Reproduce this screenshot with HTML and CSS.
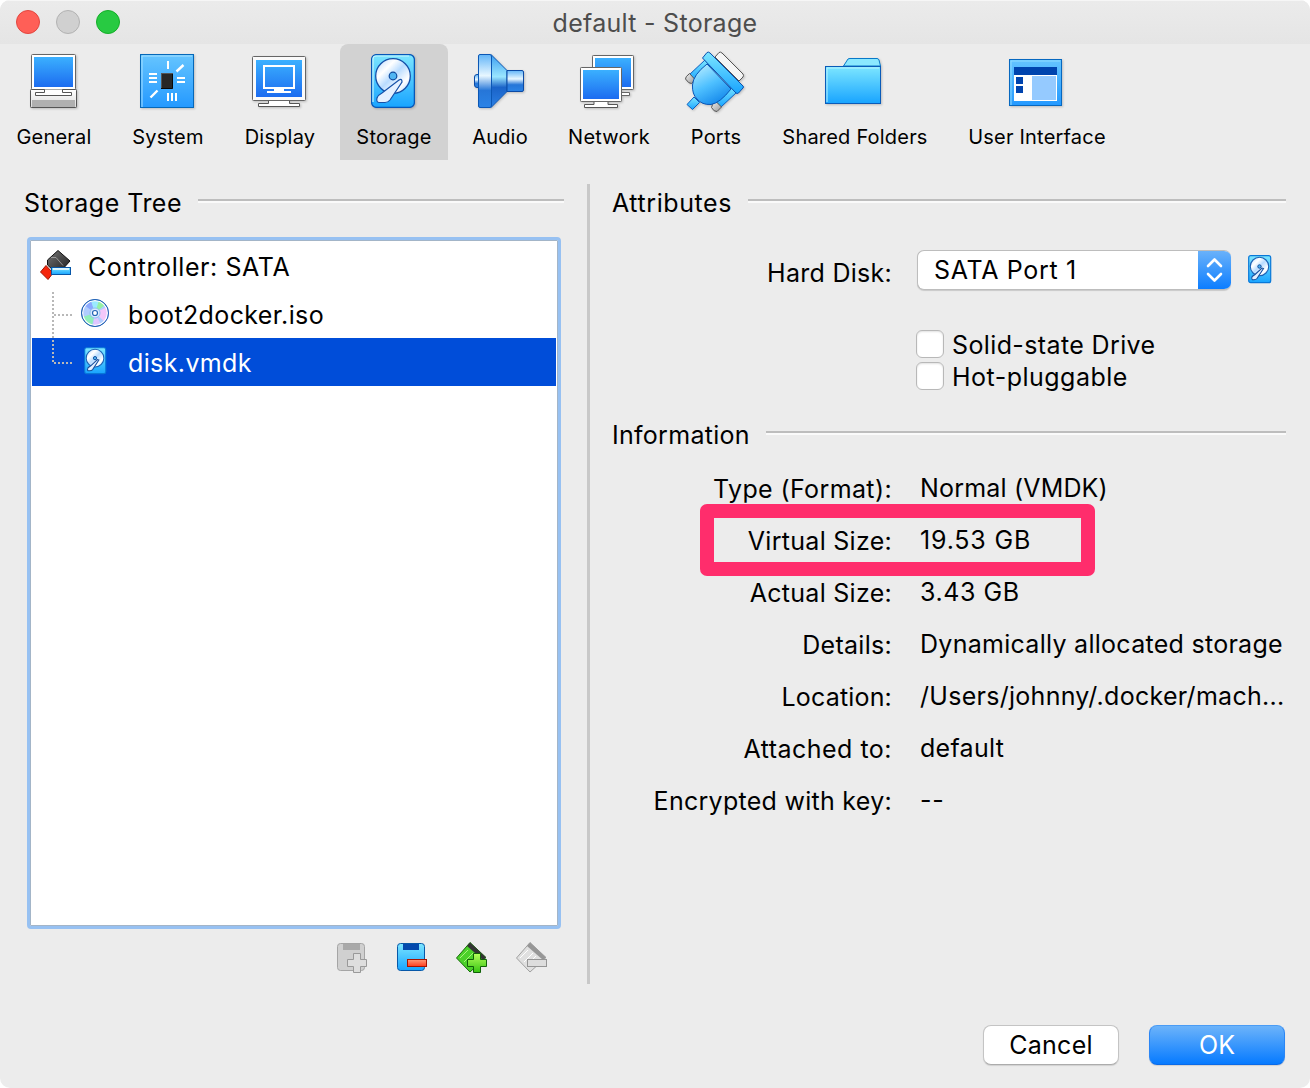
FILE: index.html
```html
<!DOCTYPE html>
<html lang="en">
<head>
<meta charset="utf-8">
<title>default - Storage</title>
<link rel="stylesheet" href="styles.css">
</head>
<body>
<svg class="defs" width="0" height="0" aria-hidden="true">
  <defs>
    <linearGradient id="screen" x1="0" y1="0" x2="0" y2="1"><stop offset="0" stop-color="#3bb0ff"/><stop offset="1" stop-color="#1c6cf0"/></linearGradient>
    <linearGradient id="sky" x1="0" y1="0" x2="0" y2="1"><stop offset="0" stop-color="#66c5ff"/><stop offset="1" stop-color="#2499ff"/></linearGradient>
    <linearGradient id="cyan" x1="0" y1="0" x2="0" y2="1"><stop offset="0" stop-color="#7de6ff"/><stop offset="1" stop-color="#18a4ff"/></linearGradient>
    <linearGradient id="grey" x1="0" y1="0" x2="0" y2="1"><stop offset="0" stop-color="#fff"/><stop offset="1" stop-color="#dcdcdc"/></linearGradient>
    <linearGradient id="silver" x1="0" y1="0" x2="1" y2="1"><stop offset="0" stop-color="#f0f0f0"/><stop offset="1" stop-color="#999"/></linearGradient>
    <linearGradient id="platter" x1="0" y1="0" x2="1" y2="1"><stop offset="0" stop-color="#b5d6ff"/><stop offset=".3" stop-color="#fff"/><stop offset=".5" stop-color="#b9dcff"/><stop offset=".75" stop-color="#fff"/><stop offset="1" stop-color="#9fcdff"/></linearGradient>
    <linearGradient id="cone" x1="0" y1="0" x2="0" y2="1"><stop offset="0" stop-color="#3a9df0"/><stop offset=".42" stop-color="#9ae6ff"/><stop offset=".62" stop-color="#1a63c8"/><stop offset="1" stop-color="#2b80e4"/></linearGradient>
    <linearGradient id="rim" x1="0" y1="0" x2="0" y2="1"><stop offset="0" stop-color="#62b5f8"/><stop offset=".4" stop-color="#e8f7ff"/><stop offset=".68" stop-color="#2676d8"/><stop offset="1" stop-color="#2b83e6"/></linearGradient>
    <linearGradient id="red" x1="0" y1="0" x2="0" y2="1"><stop offset="0" stop-color="#ff9a78"/><stop offset="1" stop-color="#ff3b1c"/></linearGradient>
    <linearGradient id="green" x1="0" y1="0" x2="0" y2="1"><stop offset="0" stop-color="#b5ff5a"/><stop offset="1" stop-color="#35c412"/></linearGradient>
    <linearGradient id="plug" x1=".2" y1="0" x2=".7" y2="1"><stop offset="0" stop-color="#b5ecff"/><stop offset=".5" stop-color="#4ec0ff"/><stop offset="1" stop-color="#1185ea"/></linearGradient>
    <linearGradient id="ink" x1="0" y1="0" x2="1" y2="1"><stop offset="0" stop-color="#777"/><stop offset="1" stop-color="#1c1c1c"/></linearGradient>
    <symbol id="disk" viewBox="0 0 44 54">
      <rect x=".6" y=".6" width="42.8" height="52.8" rx="5" fill="url(#cyan)" stroke="#0757b8" stroke-width="1.3"/>
      <path d="M2 48V5Q2 2 5 2H38" fill="none" stroke="#c5f6ff" stroke-width="1.2"/>
      <circle cx="22" cy="22" r="17.3" fill="url(#platter)" stroke="#1550a8" stroke-width="1.3"/>
      <circle cx="22" cy="22" r="3.8" fill="#50b5f2" stroke="#0e4a9d" stroke-width="1.2"/>
      <path d="M28 26Q31 24 31 28L19 46Q17 48.500 14 48.500H8Q5 48 6 44Q7 41 11 39Z" fill="#e4f0ff" stroke="#1550a8" stroke-width="1.2"/>
    </symbol>
    <symbol id="disk-small" viewBox="0 0 24 29">
      <rect x=".7" y=".7" width="22" height="27" rx="2" fill="url(#cyan)" stroke="#0878d8" stroke-width="1.2"/>
      <circle cx="11.500" cy="11.500" r="9.200" fill="url(#platter)" stroke="#1c62b5" stroke-width="1.1"/>
      <circle cx="11.500" cy="11.500" r="1.700" fill="#50b5f2" stroke="#0e4a9d" stroke-width="1"/>
      <path d="M15.500 13.500L9 23.500Q8 24.700 6 24.700H4.300Q3 23.500 4.200 21.500L7 19.500L14 13Z" fill="#e4f0ff" stroke="#174f9d" stroke-width="1.1"/>
    </symbol>
  </defs>
</svg>
<div class="window">
  <header class="titlebar">
    <div class="lights"><i class="light close"></i><i class="light minimize"></i><i class="light zoom"></i></div>
    <h1 class="title">default - Storage</h1>
  </header>

  <nav class="toolbar">
    <div class="tool w108">
      <svg class="icon" viewBox="22 48 64 64">
        <rect x="31.500" y="54.500" width="44" height="35" rx="1" fill="#fff" stroke="#666"/>
        <rect x="34" y="57" width="39" height="30" fill="url(#screen)"/>
        <rect x="30.500" y="89.500" width="46" height="18" rx=".8" fill="url(#grey)" stroke="#555"/>
        <rect x="32" y="100" width="43" height="7" fill="#b0b0b0"/>
        <path d="M44.500 89.500V92.500H35.500V95.500H71.500V92.500H62.500V89.500" fill="#fff" stroke="#555"/>
      </svg>
      <span class="label">General</span>
    </div>
    <div class="tool w104">
      <svg class="icon" viewBox="136 48 64 64">
        <rect x="140.500" y="54.500" width="53" height="53" fill="url(#sky)" stroke="#0668b8"/>
        <path d="M142 107V56H192" fill="none" stroke="#a5e0ff"/>
        <g stroke="#fff" stroke-width="2" fill="none">
          <path d="M168 61V69M149 74H157M149 78H157M149 82H157M177 78H185M177 82H185M168 93V101M172 93V101M176 93V101"/>
          <path stroke-width="2.400" d="M176.500 71.500L183.500 65M150.500 97.500L157.500 90.500"/>
        </g>
        <rect x="161.500" y="73.500" width="11" height="15" fill="#272727" stroke="#555"/>
        <path d="M161 88.500H172.500V74" stroke="#080808" fill="none"/>
      </svg>
      <span class="label">System</span>
    </div>
    <div class="tool w104">
      <svg class="icon" viewBox="248 48 64 64">
        <path d="M268.500 100V103.500H258.500V106.500H299.500V103.500H289.500V100" fill="#fff" stroke="#555"/>
        <rect x="252.500" y="56.500" width="53" height="44" rx="1" fill="#fafafa" stroke="#666"/>
        <rect x="256" y="60" width="46" height="37" fill="url(#screen)"/>
        <path d="M264 66H294V88H264ZM267 92H291" fill="none" stroke="#fff" stroke-width="2"/>
        <rect x="274" y="88" width="10" height="4" fill="#fff"/>
      </svg>
      <span class="label">Display</span>
    </div>
    <div class="tool w108 selected">
      <svg class="icon" viewBox="362 48 64 64"><use href="#disk" x="371" y="54" width="44" height="54"/></svg>
      <span class="label">Storage</span>
    </div>
    <div class="tool w88">
      <svg class="icon" viewBox="468 48 64 64">
        <rect x="474.500" y="74.500" width="6" height="13" rx="2.500" fill="url(#rim)" stroke="#0b4aa5"/>
        <path d="M491 54.500L507 70.500V91.500L491 107.500Z" fill="url(#cone)" stroke="#0b57b5"/>
        <path d="M507 70.500H522Q523.500 70.500 523.500 72V90Q523.500 91.500 522 91.500H507Z" fill="url(#rim)" stroke="#0b4aa5"/>
        <path d="M480 54.500H490Q491.500 54.500 491.500 57V105Q491.500 107.500 490 107.500H480Q478.500 107.500 478.500 106V56Q478.500 54.500 480 54.500Z" fill="url(#rim)" stroke="#0b57b5"/>
      </svg>
      <span class="label">Audio</span>
    </div>
    <div class="tool w114">
      <svg class="icon" viewBox="577 48 64 64">
        <path d="M606 89V92.500H597.500V95.500H629.500V92.500H621V89" fill="#fff" stroke="#666"/>
        <rect x="592.500" y="55.500" width="41" height="34" rx=".8" fill="#fff" stroke="#666"/>
        <rect x="595" y="58" width="36" height="29" fill="url(#screen)"/>
        <path d="M594 101V104.500H584.500V107.500H617.500V104.500H608V101" fill="#fff" stroke="#555"/>
        <rect x="580.500" y="67.500" width="41" height="34" rx=".8" fill="#fff" stroke="#666"/>
        <rect x="583" y="70" width="36" height="29" fill="url(#screen)"/>
      </svg>
      <span class="label">Network</span>
    </div>
    <div class="tool w84">
      <svg class="icon" viewBox="684 48 64 64">
        <path d="M715 57L719 52.500Q720.500 51.500 722 53L743 74Q744 75.500 743 77L739 81Z" fill="#f5f5f5" stroke="#555"/>
        <path d="M705 60L710 66L695 81L689 75Z" fill="url(#cyan)" stroke="#0a5ec0"/>
        <path d="M689.500 73.500L695 79.500L691.500 83.500Q689 84 685.500 79Q685 77 689.500 73.500Z" fill="url(#silver)" stroke="#555"/>
        <path d="M731 86L737 92L721 107L715 101Z" fill="url(#cyan)" stroke="#0a5ec0"/>
        <path d="M715.500 101L721.500 107L717 111.500Q714 112 711.500 107.500Q711.500 105 715.500 101Z" fill="url(#silver)" stroke="#555"/>
        <path d="M694 97L699.500 102.500L692.500 109.500L687 104.500Z" fill="url(#cyan)" stroke="#0a5ec0"/>
        <path d="M707 64Q693 75 692.500 85Q692 94 697 99Q702 105 711 104.500Q720 103 731 89Z" fill="url(#plug)" stroke="#0a55b5"/>
        <path d="M702.500 58L707 52.500Q708.500 51.500 710 53L743 86Q744 87 743 88L738.500 93Q737 94 736 93Z" fill="url(#cyan)" stroke="#0a4fae"/>
      </svg>
      <span class="label">Ports</span>
    </div>
    <div class="tool w178">
      <svg class="icon" viewBox="823 48 64 64">
        <path d="M843.500 66L848 59Q849 58.500 850 58.500H877Q878.500 58.500 879 60L880.500 66Z" fill="#8be8ff" stroke="#0878c8"/>
        <rect x="825.500" y="66.500" width="55" height="37" fill="url(#cyan)" stroke="#0a5bb8"/>
        <path d="M827 102V68H879" fill="none" stroke="#b8f3ff"/>
      </svg>
      <span class="label">Shared Folders</span>
    </div>
    <div class="tool w170">
      <svg class="icon" viewBox="1005 48 64 64">
        <rect x="1009.500" y="59.500" width="52" height="46" fill="url(#sky)" stroke="#0668c0"/>
        <path d="M1011 105V61H1060" fill="none" stroke="#8fdcff"/>
        <rect x="1014" y="67" width="43" height="34" fill="#fff"/>
        <path d="M1014 67H1057V75H1014ZM1016 77H1023V84H1016ZM1016 86H1023V93H1016Z" fill="#0044ae"/>
        <rect x="1032" y="76" width="24" height="24" fill="#95caff"/>
      </svg>
      <span class="label">User Interface</span>
    </div>
  </nav>

  <main class="content">
    <section class="left">
      <h2 class="heading"><span class="ls5">Storage Tree</span></h2>
      <div class="tree">
        <div class="row root">
          <svg class="row-icon" width="40" height="40" viewBox="36 246 40 40">
            <path d="M40.500 272L46 265.500L53 273L48 279.500Z" fill="#f5260c" stroke="#a01400"/>
            <path d="M47.500 265V260L58 250.500L70 261L61 271H54Z" fill="url(#ink)" stroke="#111"/>
            <path d="M51 257.500H56L63 265.500" stroke="#aaa" stroke-width=".8" fill="none"/>
            <rect x="51.500" y="267.500" width="19" height="7" fill="url(#cyan)" stroke="#0757a8"/>
            <path d="M53 269H69" stroke="#fff" stroke-width="1.500"/>
          </svg>
          <span class="ls6">Controller: SATA</span>
        </div>
        <div class="row">
          <svg class="row-icon" width="64" height="48" viewBox="48 290 64 48">
            <path d="M53 292V338" stroke="#b8b8b8" stroke-width="2" stroke-dasharray="2 2" fill="none"/>
            <path d="M54 315H72" stroke="#b8b8b8" stroke-width="2" stroke-dasharray="2 2" fill="none"/>
            <circle cx="95" cy="313" r="13.500" fill="#b0cdff" stroke="#2666b8"/>
            <path d="M95 313L84 305A13 13 0 0 1 91 300.500Z" fill="#8ba9ff"/>
            <path d="M95 313L91 300.500A13 13 0 0 1 103 303Z" fill="#9beaff"/>
            <path d="M95 313L99 300.500A13 13 0 0 1 105 305Z" fill="#95f0a5"/>
            <path d="M95 313L107 307A13 13 0 0 1 105 322Z" fill="#f3c8fa"/>
            <path d="M95 313L92 325.500A13 13 0 0 1 82.500 317Z" fill="#90efba"/>
            <path d="M95 313L101 324.500A13 13 0 0 1 93 326Z" fill="#dfc6ff"/>
            <circle cx="95" cy="313" r="12.300" fill="none" stroke="#fff" stroke-width="1.200"/>
            <circle cx="95" cy="313" r="13.500" fill="none" stroke="#2666b8"/>
            <circle cx="95" cy="313" r="5" fill="#d8eaff" stroke="#8fc0f0"/>
            <circle cx="95" cy="313" r="2.500" fill="#fff" stroke="#2565b5" stroke-width="1.200"/>
          </svg>
          <span class="ls4">boot2docker.iso</span>
        </div>
        <div class="row active">
          <svg class="row-icon" width="64" height="48" viewBox="48 338 64 48">
            <path d="M53 340V363H72" stroke="#b8b8b8" stroke-width="2" stroke-dasharray="2 2" fill="none"/>
            <use href="#disk-small" x="84" y="347" width="23" height="28"/>
          </svg>
          <span class="ls4">disk.vmdk</span>
        </div>
      </div>
      <div class="actions">
        <svg width="34" height="34" viewBox="336 941 34 34">
          <rect x="337.500" y="943.500" width="27" height="27" rx="3" fill="#d0d0d0" stroke="#a5a5a5"/>
          <path d="M343 944H360V950H343Z" fill="#a9a9a9"/>
          <path d="M353.500 953.500H360.500V959.500H366.500V966.500H360.500V972.500H353.500V966.500H347.500V959.500H353.500Z" fill="#dedede" stroke="#999"/>
        </svg>
        <svg width="34" height="34" viewBox="396 941 34 34">
          <rect x="397.500" y="943.500" width="27" height="27" rx="3" fill="url(#cyan)" stroke="#0758a8"/>
          <path d="M403 944H419V950H403Z" fill="#0349ad"/>
          <rect x="407.500" y="959.500" width="19" height="7" fill="url(#red)" stroke="#a51200"/>
        </svg>
        <svg width="34" height="34" viewBox="456 941 34 34">
          <path d="M470 942.500L486 957.500L470 972L456.500 958Z" fill="#4bd02a" stroke="#156b08"/>
          <path d="M470 942.500L486 957.500L483 960L467 946Z" fill="#333"/>
          <path d="M460 958L468 950M464 962L473 953M467 965L476 956" stroke="#a5f579"/>
          <path d="M473.500 953.500H480.500V959.500H486.500V966.500H480.500V972.500H473.500V966.500H467.500V959.500H473.500Z" fill="url(#green)" stroke="#106008"/>
        </svg>
        <svg width="34" height="34" viewBox="516 941 34 34">
          <path d="M530 942.500L546 957.500L530 972L516.500 958Z" fill="#e0e0e0" stroke="#a0a0a0"/>
          <path d="M530 942.500L546 957.500L543 960L527 946Z" fill="#969696"/>
          <path d="M520 958L528 950M524 962L533 953M527 965L536 956" stroke="#fff"/>
          <rect x="527.500" y="959.500" width="19" height="7" fill="#ddd" stroke="#959595"/>
        </svg>
      </div>
    </section>

    <section class="right">
      <h2 class="heading"><span class="ls6">Attributes</span></h2>
      <div class="port">
        <span class="key ls3">Hard Disk:</span>
        <div class="select"><span class="value ls7">SATA Port 1</span>
          <span class="stepper"><svg width="32" height="40" viewBox="0 0 32 40"><path d="M10 16L16.500 9.500L23 16M10 24L16.500 30.500L23 24" fill="none" stroke="#fff" stroke-width="2.600" stroke-linecap="round" stroke-linejoin="round"/></svg></span>
        </div>
        <svg class="pick" width="24" height="29"><use href="#disk-small" width="24" height="29"/></svg>
      </div>
      <div class="checks">
        <label class="check"><i class="box"></i><span class="ls4">Solid-state Drive</span></label>
        <label class="check"><i class="box"></i><span class="ls5">Hot-pluggable</span></label>
      </div>
      <h2 class="heading"><span class="ls3">Information</span></h2>
      <dl class="info">
        <dt class="ls4">Type (Format):</dt><dd class="ls2">Normal (VMDK)</dd>
        <dt class="marked ls3">Virtual Size:</dt><dd class="ls8">19.53 GB</dd>
        <dt class="ls3">Actual Size:</dt><dd class="ls6">3.43 GB</dd>
        <dt class="ls3">Details:</dt><dd class="ls3">Dynamically allocated storage</dd>
        <dt class="ls2">Location:</dt><dd class="ls3">/Users/johnny/.docker/mach...</dd>
        <dt class="ls5">Attached to:</dt><dd class="ls3">default</dd>
        <dt class="ls3">Encrypted with key:</dt><dd class="ls8">--</dd>
      </dl>
    </section>
  </main>

  <footer class="footer">
    <button class="button"><span class="ls3">Cancel</span></button>
    <button class="button primary">OK</button>
  </footer>
</div>
</body>
</html>
```
FILE: styles.css
```css
*, *::after { box-sizing: border-box; }
body { margin: 0; background: #fff; font: 25px/32px Inter, "Liberation Sans", sans-serif; color: #000; }
.defs { position: absolute; }
.window { width: 1310px; height: 1088px; display: flex; flex-direction: column; background: #ececec; border-radius: 10px; overflow: hidden; white-space: nowrap; }
.titlebar { height: 44px; flex: none; display: grid; grid-template-columns: 1fr auto 1fr; align-items: center; background: linear-gradient(#ebebeb, #e5e5e5); border-top: 1px solid #f6f6f6; }
.lights { display: flex; gap: 16px; padding: 0 0 2px 16px; }
.light { width: 24px; height: 24px; border-radius: 50%; border: 1px solid; }
.close { background: #ff5f57; border-color: #e2463f; }
.minimize { background: #d0d0d0; border-color: #b2b2b2; }
.zoom { background: #28ca42; border-color: #14ae28; }
.title { margin: 0; font-size: 25px; font-weight: 400; color: #4d4d4d; letter-spacing: .28px; }

/* Tracking steps, in tenths of a pixel */
.ls2 { letter-spacing: .18px; }
.ls3 { letter-spacing: .28px; }
.ls4 { letter-spacing: .38px; }
.ls5 { letter-spacing: .48px; }
.ls6 { letter-spacing: .58px; }
.ls7 { letter-spacing: .68px; }
.ls8 { letter-spacing: .82px; }

.toolbar { height: 116px; flex: none; display: flex; gap: 8px; }
.tool { display: flex; flex-direction: column; align-items: center; padding-top: 4px; }
.selected { background: #d2d2d2; border-radius: 8px 8px 0 0; }
.w84 { width: 84px; } .w88 { width: 88px; } .w104 { width: 104px; } .w108 { width: 108px; }
.w114 { width: 114px; } .w170 { width: 170px; } .w178 { width: 178px; }
.icon { width: 64px; height: 64px; flex: none; overflow: visible; filter: drop-shadow(1px 1px 1px rgba(0, 0, 0, .2)); }
.label { font-size: 20px; line-height: 24px; margin-top: 13px; letter-spacing: .2px; }

.content { flex: none; height: 824px; padding-top: 24px; display: flex; }
.left { width: 590px; padding: 2px 23px 0 24px; border-right: 3px solid #c8c8c8; height: 800px; }
.heading { margin: 0; display: flex; gap: 16px; font-size: 25px; font-weight: 400; line-height: 34px; height: 34px; }
.heading::after { content: ""; flex: 1; height: 4px; margin-top: 13px; border-top: 2px solid #bdbdbd; border-bottom: 2px solid #fafafa; }
.tree { margin: 17px 0 0 3px; width: 534px; height: 692px; border: 3px solid #97c1f2; border-radius: 4px; background: #fff; padding: 2px 2px 0; box-shadow: inset 0 0 0 1px #a3b5c8; }
.row { height: 48px; display: flex; align-items: center; gap: 16px; padding-left: 16px; }
.row span { padding-top: 2px; }
.root { padding-left: 4px; gap: 12px; }
.active { background: #004dd9; color: #fff; }
.row-icon { flex: none; }
.actions { display: flex; gap: 26px; padding: 12px 0 0 312px; }

.right { flex: 1; padding: 2px 24px 0 22px; }
.port { display: flex; margin-top: 30px; height: 40px; }
.key { width: 280px; text-align: right; line-height: 46px; }
.select { width: 314px; height: 40px; margin-left: 25px; display: flex; background: #fff; border-radius: 7px; overflow: hidden; border: 1px solid #bdbdbd; border-right: 0; box-shadow: 0 1px 1px rgba(0, 0, 0, .15); }
.value { flex: 1; padding-left: 16px; line-height: 38px; }
.stepper { width: 33px; margin: -1px 0; background: linear-gradient(#6cb3fa, #0a7cff); }
.pick { margin: 5px 0 0 17px; }
.checks { margin: 38px 0 0 304px; }
.check { display: flex; align-items: center; gap: 8px; height: 32px; }
.check span { padding-top: 2px; }
.box { width: 28px; height: 28px; border: 1px solid #b8b8b8; border-radius: 6px; background: #fff; box-shadow: inset 0 1px 2px rgba(0, 0, 0, .12); }
.checks + .heading { margin-top: 26px; }
.info { margin: 20px 0 0; display: grid; grid-template-columns: 280px 1fr; column-gap: 28px; grid-auto-rows: 52px; }
.info dt { text-align: right; line-height: 34px; }
.info dd { margin: 0; line-height: 32px; }
.marked { position: relative; }
.marked::after { content: ""; position: absolute; left: 88px; top: -20px; width: 395px; height: 72px; border: 14px solid #ff2d6c; border-radius: 7px; }

.footer { display: flex; justify-content: flex-end; gap: 30px; padding: 41px 25px 0 0; }
.button { font: inherit; width: 136px; height: 40px; padding: 0; border: 1px solid #c4c4c4; border-bottom-color: #acacac; border-radius: 8px; background: #fff; box-shadow: 0 1px 1px rgba(0, 0, 0, .12); }
.primary { color: #fff; border-color: #4a9cf5 #2b86f5 #0a6ae8; background: linear-gradient(#6cb3fa, #067aff); }
```
